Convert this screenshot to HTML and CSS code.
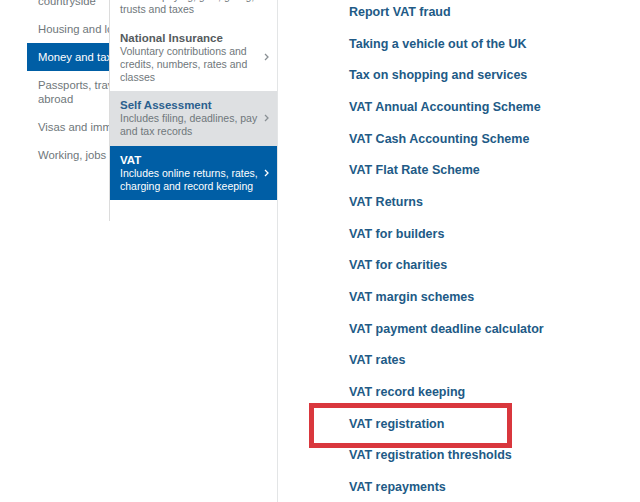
FILE: index.html
```html
<!DOCTYPE html>
<html>
<head>
<meta charset="utf-8">
<link rel="stylesheet" href="styles.css">
</head>
<body>
<div class="page">
  <nav class="topics">
    <ul class="topic-list">
      <li class="topic">Environment and<br>countryside</li>
      <li class="topic">Housing and local services</li>
      <li class="topic active">Money and tax</li>
      <li class="topic">Passports, travel and living<br>abroad</li>
      <li class="topic">Visas and immigration</li>
      <li class="topic">Working, jobs and pensions</li>
    </ul>
  </nav>
  <div class="subtopics">
    <ul class="sub-list">
      <li class="sub">
        <div class="sub-text">
          <div class="sub-title">Inheritance Tax</div>
          <div class="sub-desc">Includes paying, gifts, giving,<br>trusts and taxes</div>
        </div>
      </li>
      <li class="sub">
        <div class="sub-text">
          <div class="sub-title">National Insurance</div>
          <div class="sub-desc">Voluntary contributions and credits, numbers, rates and classes</div>
        </div>
        <svg class="chev" viewBox="0 0 5 8" width="5" height="8"><path d="M1 1 L4 4 L1 7" fill="none" stroke="currentColor" stroke-width="1.3"/></svg>
      </li>
      <li class="sub hover">
        <div class="sub-text">
          <div class="sub-title">Self Assessment</div>
          <div class="sub-desc">Includes filing, deadlines, pay and tax records</div>
        </div>
        <svg class="chev" viewBox="0 0 5 8" width="5" height="8"><path d="M1 1 L4 4 L1 7" fill="none" stroke="currentColor" stroke-width="1.3"/></svg>
      </li>
      <li class="sub selected">
        <div class="sub-text">
          <div class="sub-title">VAT</div>
          <div class="sub-desc">Includes online returns, rates, charging and record keeping</div>
        </div>
        <svg class="chev" viewBox="0 0 5 8" width="5" height="8"><path d="M1 1 L4 4 L1 7" fill="none" stroke="currentColor" stroke-width="1.3"/></svg>
      </li>
    </ul>
  </div>
  <main class="links">
    <ul class="link-list">
      <li><a href="#">Report VAT fraud</a></li>
      <li><a href="#">Taking a vehicle out of the UK</a></li>
      <li><a href="#">Tax on shopping and services</a></li>
      <li><a href="#">VAT Annual Accounting Scheme</a></li>
      <li><a href="#">VAT Cash Accounting Scheme</a></li>
      <li><a href="#">VAT Flat Rate Scheme</a></li>
      <li><a href="#">VAT Returns</a></li>
      <li><a href="#">VAT for builders</a></li>
      <li><a href="#">VAT for charities</a></li>
      <li><a href="#">VAT margin schemes</a></li>
      <li><a href="#">VAT payment deadline calculator</a></li>
      <li><a href="#">VAT rates</a></li>
      <li><a href="#">VAT record keeping</a></li>
      <li class="marked"><a href="#">VAT registration</a><span class="highlight"></span></li>
      <li><a href="#">VAT registration thresholds</a></li>
      <li><a href="#">VAT repayments</a></li>
    </ul>
  </main>
</div>
</body>
</html>
```
FILE: styles.css
```css
* { box-sizing: border-box; }
html, body { margin: 0; padding: 0; background: #fff; }
body {
  font-family: "Liberation Sans", Arial, sans-serif;
  width: 640px;
  height: 502px;
  overflow: hidden;
}
ul { list-style: none; margin: 0; padding: 0; }

.page {
  display: flex;
  height: 502px;
  overflow: hidden;
}

/* left topics column */
.topics {
  width: 109px;
  flex: none;
  overflow: hidden;
  padding-left: 27px;
}
.topic-list {
  margin-top: -27px;
  width: 200px;
}
.topic {
  padding: 7px 11px;
  font-size: 11.3px;
  line-height: 14px;
  color: #6f777b;
  white-space: nowrap;
}
.topic.active {
  background: #005ea5;
  color: #fff;
}

/* middle subtopics column */
.subtopics {
  width: 169px;
  flex: none;
  border-right: 1px solid #e3e5e6;
}
.sub-list {
  margin-top: -31px;
  border-left: 1px solid #dcdcdc;
  padding-bottom: 21px;
}
.sub {
  display: flex;
  align-items: center;
  padding: 7px 8px 7.5px 10px;
  color: #6f777b;
}
.sub-text { flex: 1; }
.sub-title {
  font-size: 11.5px;
  line-height: 14px;
  font-weight: bold;
  color: #555b5e;
}
.sub-desc {
  font-size: 10.5px;
  line-height: 13px;
  color: #6f777b;
  padding-right: 4px;
}
.chev { flex: none; color: #8a9094; margin-left: 2px; }
.sub.hover { background: #dee0e2; }
.sub.hover .sub-title { color: #2b5f8e; }
.sub.selected { background: #005ea5; }
.sub.selected .sub-title,
.sub.selected .sub-desc,
.sub.selected .chev { color: #fff; }

/* right links column */
.links {
  flex: 1;
  padding-left: 71px;
}
.link-list { padding-top: 4px; }
.link-list li {
  font-size: 12.5px;
  line-height: 16px;
  margin-bottom: 15.67px;
  position: relative;
}
.link-list a {
  font-weight: bold;
  color: #215a86;
  text-decoration: none;
}
.highlight {
  position: absolute;
  left: -40px;
  top: -13px;
  width: 203px;
  height: 45px;
  border: 5px solid #d9373d;
}
```
